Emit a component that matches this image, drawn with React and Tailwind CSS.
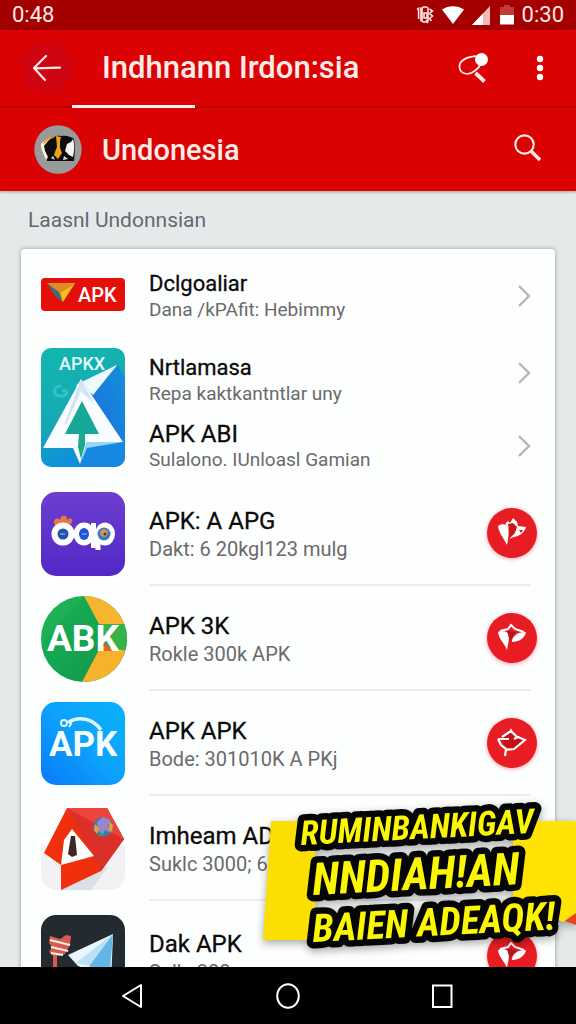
import React from "react";

const ROBOTO = "font-['Roboto','Liberation_Sans',sans-serif]";

function StatusBar() {
  return (
    <div className="flex h-[30px] shrink-0 items-center justify-between bg-[#a40000] px-3 text-[22px] leading-6 text-[#ffe9e6]">
      <span>0:48</span>
      <div className="flex items-center gap-2">
        <svg width="18" height="20" viewBox="0 0 18 20" fill="none" stroke="#ffe9e6" strokeWidth="1.6" aria-hidden="true">
          <path d="M1 4.5 2.6 3.5V14M5 2.5v14M13.5 4l3 2-3 2.500 3 2.500-3 2.500 2 2.500" />
          <rect x="6" y="2" width="6" height="15" rx="2" />
          <path d="M8 8h3v5H8zM10 15l2 3" />
        </svg>
        <svg width="22" height="18" viewBox="0 0 22 18" fill="#fff" aria-hidden="true">
          <path d="M0 3.500C6-1 16-1 22 3.500L11 18z" />
        </svg>
        <svg width="18" height="19" viewBox="0 0 18 19" aria-hidden="true">
          <path d="M18 0v19H0z" fill="#f3b9b5" />
          <path d="M11 7.400V19H0z" fill="#fff" />
        </svg>
        <svg width="14" height="20" viewBox="0 0 14 20" className="ml-0.5" aria-hidden="true">
          <path d="M4 0h6v2h4v8H0V2h4z" fill="#c23a38" />
          <path d="M0 10h14v9.500H0z" fill="#fff" />
        </svg>
        <span>0:30</span>
      </div>
    </div>
  );
}

function Header() {
  return (
    <header className="relative z-10 shrink-0 bg-[#da0202] text-white shadow-[0_1px_3px_rgba(0,0,0,0.3)]">
      <div className="relative flex h-[78px] items-center border-b-2 border-[#b90202] pl-[22px] pr-7">
        <button type="button" aria-label="Back" className="flex size-[50px] items-center justify-center rounded-full bg-[#cf0514]">
          <svg width="30" height="28" viewBox="0 0 30 28" fill="none" stroke="#ffe9e6" strokeWidth="2.200" strokeLinecap="round" strokeLinejoin="round" aria-hidden="true">
            <path d="M14 2 2 14l11 12M2 14.300 28 13.600" />
          </svg>
        </button>
        <h1 className="ml-[30px] flex-1 whitespace-nowrap text-[31px] font-medium leading-9 text-[#ffece9]">Indhnann Irdon:sia</h1>
        <button type="button" aria-label="Find apps" className="mr-11">
          <svg width="30" height="32" viewBox="0 0 30 32" fill="none" aria-hidden="true">
            <path d="M18 4C10 5 1 7 1.500 15c.5 7 9 9 15 4 3-2 5-4 6-7" stroke="#ffe9e6" strokeWidth="1.800" />
            <circle cx="23.500" cy="7.500" r="6.500" fill="#fff" />
            <path d="m17.500 21 9 8.500" stroke="#ffe9e6" strokeWidth="3.800" />
          </svg>
        </button>
        <button type="button" aria-label="More options" className="px-1">
          <svg width="8" height="26" viewBox="0 0 8 26" fill="#fff" aria-hidden="true">
            <circle cx="4" cy="4" r="3.200" />
            <circle cx="4" cy="13" r="3.200" />
            <circle cx="4" cy="22" r="3.200" />
          </svg>
        </button>
        <span className="absolute -bottom-0.5 left-[72px] h-[3px] w-[123px] bg-[#fff0ee]" />
      </div>
      <div className="flex h-[83px] items-center pl-[34px] pr-[34px]">
        <svg width="48" height="49" viewBox="0 0 48 49" aria-hidden="true">
          <ellipse cx="24" cy="24.500" rx="23.700" ry="24.300" fill="#999a9c" />
          <path d="M8 18c4-5 12-8 19-7 6-1 10 1 13 3 1 6 1 14 0 22H13C12 29 7 25 8 18z" fill="#0d0d0d" />
          <path d="M7 19c3-4 6-6 11-7l-4 4-4 5 1 5 3 6-2 3C10 29 7 25 7 19z" fill="#fff3e0" />
          <path d="M10 16c4-3 8-5 12-5l-3 2-5 2-5 5zM22 11l5 1-1 4 0 7 2 5-4 6-4-4 1-3 2-5z" fill="#eaa414" />
          <path d="M39 14c2 6 1 14 0 18l-4-2-4-4 2-7 4-2z" fill="#f4f4f4" />
          <path d="M30 31l4 3-5 1zM17 33l2-2 2 4z" fill="#ddd" />
        </svg>
        <h2 className="ml-5 flex-1 text-[29px] font-medium leading-9 text-[#ffece9]">Undonesia</h2>
        <button type="button" aria-label="Search">
          <svg width="28" height="28" viewBox="0 0 28 28" fill="none" stroke="#ffe9e6" aria-hidden="true" className="-mt-1">
            <circle cx="10.500" cy="10.500" r="9.200" strokeWidth="2.200" />
            <path d="m17 17 9 9" strokeWidth="3.600" />
          </svg>
        </button>
      </div>
    </header>
  );
}

function RedApkLogo() {
  return (
    <svg width="84" height="33" viewBox="0 0 84 33" aria-hidden="true">
      <rect width="84" height="33" rx="4" fill="#e50f0a" />
      <path d="M6 5h28L21 24 18 14z" fill="#f6a81c" />
      <path d="M6 5 19 15l3 9-8-6z" fill="#3d6f7a" />
      <path d="M34 5 19 15l3 9z" fill="#f3c11f" />
      <path d="M6 5h16l12 1-15 9z" fill="#dd8b26" />
      <text x="37" y="24" fontSize="20" fontWeight="500" fill="#fff">APK</text>
    </svg>
  );
}

function TallLogo() {
  return (
    <svg width="84" height="119" viewBox="0 0 84 119" aria-hidden="true">
      <defs>
        <linearGradient id="tallBack" x1="0" y1="0" x2="0.300" y2="1">
          <stop offset="0" stopColor="#12b8ad" />
          <stop offset="0.600" stopColor="#16a9b5" />
          <stop offset="1" stopColor="#0d8fe0" />
        </linearGradient>
        <linearGradient id="tallBlue" x1="1" y1="0" x2="0" y2="1">
          <stop offset="0" stopColor="#1590d8" />
          <stop offset="1" stopColor="#1a6fe0" />
        </linearGradient>
        <clipPath id="tallClip"><rect width="84" height="119" rx="10" /></clipPath>
      </defs>
      <g clipPath="url(#tallClip)">
        <rect width="84" height="119" fill="url(#tallBack)" />
        <path d="M77 17 51 48l29 46 4-4V30z" fill="url(#tallBlue)" />
        <path d="M43 97h41v22H38z" fill="#1688e2" />
        <path d="M76 17 36 36l-8 35 20-24z" fill="#b9e6f3" />
        <path d="M76 17 42 34l10 13z" fill="#eefafd" />
        <path d="M40 31 82 94H46l-7 22-7-16H2z" fill="#fafdff" />
        <path d="m40 31 13 25-13-13-14 32-3 2z" fill="#d2e5f3" />
        <path d="m41 53 17 33H24z" fill="#16a797" />
        <path d="M38 85h6v12l-4 14-3-12z" fill="#19ab8e" />
        <path d="m46 94 36 0-36 6-6 14z" fill="#9bd5f5" />
        <path d="M20 38c-9 0-8 11 0 10 7 0 8-7 1-5" fill="none" stroke="#43d4cb" strokeWidth="3" opacity=".6" />
        <text x="18" y="22" fontSize="18" fontWeight="500" fill="#e3fbfb">APKX</text>
      </g>
    </svg>
  );
}

function PurpleLogo() {
  return (
    <svg width="84" height="84" viewBox="0 0 84 84" aria-hidden="true">
      <defs>
        <linearGradient id="purple" x1="0" y1="0" x2="0" y2="1">
          <stop offset="0" stopColor="#6d3fd0" />
          <stop offset="1" stopColor="#5128c6" />
        </linearGradient>
      </defs>
      <rect width="84" height="84" rx="15" fill="url(#purple)" />
      <path d="M13 31c-1-4 4-6 6-3 0-6 8-6 7 0 4-4 7 0 4 4l-6 4-9-1z" fill="#e4774c" />
      <g fill="none" stroke="#fff" strokeWidth="5">
        <ellipse cx="22" cy="42" rx="9" ry="9" fill="#fff" />
        <ellipse cx="43" cy="42" rx="8" ry="9" fill="#fff" />
        <path d="M52.500 31v25" />
        <ellipse cx="64" cy="42" rx="7.500" ry="9" fill="#fff" />
        <path d="M57 38v20" />
      </g>
      <ellipse cx="22" cy="42" rx="5.500" ry="5.500" fill="#254fa8" />
      <ellipse cx="43" cy="42" rx="5" ry="6" fill="#2454db" />
      <circle cx="63" cy="42" r="6.500" fill="#3e78c7" />
      <circle cx="63" cy="41" r="3.800" fill="#d39755" />
      <circle cx="64" cy="42" r="1.500" fill="#523536" />
      <path d="M19 42h5M41 42h5" stroke="#6da7ea" strokeWidth="1.500" />
    </svg>
  );
}

function GreenLogo() {
  return (
    <svg width="86" height="86" viewBox="0 0 86 86" className="-mr-0.5" aria-hidden="true">
      <defs>
        <linearGradient id="green" x1="0" y1="0" x2="1" y2="1">
          <stop offset="0" stopColor="#22b957" />
          <stop offset="1" stopColor="#0b9149" />
        </linearGradient>
        <clipPath id="round"><circle cx="43" cy="43" r="43" /></clipPath>
      </defs>
      <g clipPath="url(#round)">
        <rect width="86" height="86" fill="url(#green)" />
        <path d="M43 0 58 28 29 61 0 86V50z" fill="#12a751" opacity=".6" />
        <path d="m43 0 15 28h28V0z" fill="#f7b52f" />
        <path d="M58 28h28v32L72 50z" fill="#35b34a" />
        <path d="m60 50 26 5v31H41z" fill="#f6b12d" />
        <path d="m64 46 7 9h-8z" fill="#e75f25" />
        <text x="6" y="55" fontSize="37" fontWeight="700" fill="#fff">ABK</text>
      </g>
    </svg>
  );
}

function BlueLogo() {
  return (
    <svg width="84" height="83" viewBox="0 0 84 83" aria-hidden="true">
      <defs>
        <linearGradient id="blue" x1="1" y1="0" x2="0" y2="1">
          <stop offset="0" stopColor="#08b3fb" />
          <stop offset="0.500" stopColor="#0da1fb" />
          <stop offset="1" stopColor="#087af8" />
        </linearGradient>
      </defs>
      <rect width="84" height="83" rx="15" fill="url(#blue)" />
      <path d="M28 20c9-6 24-4 32 8" fill="none" stroke="#dff5ff" strokeWidth="3.500" />
      <circle cx="23" cy="21" r="3" fill="none" stroke="#dff5ff" strokeWidth="2" />
      <path d="m27 19 3 3-2 3" fill="none" stroke="#dff5ff" strokeWidth="2" />
      <text x="8" y="54" fontSize="35" fontWeight="700" fill="#f3fbff">APK</text>
    </svg>
  );
}

function GemLogo() {
  return (
    <svg width="84" height="84" viewBox="0 0 84 84" aria-hidden="true">
      <path d="M0 38h84v30a15 15 0 0 1-15 15H15A15 15 0 0 1 0 68z" fill="#f2f2f5" />
      <path d="M22 60 67 60 50 83H20z" fill="#dcdfe6" />
      <path d="m26 1 40 0 17 31-23 32-40 19V58L3 46z" fill="#f02f0c" />
      <path d="m26 1 40 0 17 31-23 32-7-14z" fill="#e53a32" />
      <path d="m26 1 27 49 7 14 23-32z" fill="#dd2f2a" />
      <path d="m26 1 40 0 17 31z" fill="#ed453e" />
      <path d="m31 22 22 27-33 9 3-25z" fill="#fffdfc" />
      <path d="m30 29 4 0 2 19-5 2-4-3z" fill="#3d2528" />
      <circle cx="62" cy="20" r="10" fill="#4673ad" />
      <path d="m56 15 6-5 7 3-2 5 3 8-6-3-3 6-5-7z" fill="#9d85c9" />
      <path d="m68 14 4 4-1 7-3-2zM54 17l4 5-2 5-3-4z" fill="#d9a938" />
      <path d="m59 24 4 5-5 0z" fill="#38a05e" />
    </svg>
  );
}

function DarkLogo() {
  return (
    <svg width="84" height="84" viewBox="0 0 84 84" aria-hidden="true">
      <rect width="84" height="84" rx="15" fill="#232b31" />
      <path d="m72 19-45 21 10 11 22 8 11 10z" fill="#e8f7ff" />
      <path d="M72 19 48 51l20 18z" fill="#64b7e4" />
      <path d="m72 19-37 29 13 3z" fill="#b9e0f4" />
      <path d="m9 21 10 3 6-4 5 1-1 9-5 9-8 2v12h-4V41l-4-4 3-5-3-4z" fill="#d95b4d" />
      <path d="m9 25 20 5M10 32l17 4M10 38l12 2" stroke="#fff0e9" strokeWidth="2" />
    </svg>
  );
}

const marks = {
  bird: (
    <>
      <path d="M1 8c4-3 8-2 10 1 1 4 1 9-1 18C6 19 2 15 1 8z" fill="#fff" />
      <path d="m8 6 3-3 2 2 3-5 4 4 1 4 8 1c-1 5-6 9-12 10-2 1-4 1-5 3l4-8z" fill="#fff" />
      <path d="m11 6 5-1 4 4-2 6-6 6 0-10z" fill="#c9151c" />
      <path d="m22 12 4 0-2 3z" fill="#e71d23" />
    </>
  ),
  leaf: (
    <>
      <path d="M1 9c3-2 8-1 10 1 2 5 0 10-1 17C7 19 2 17 1 9zM29 9c-1 6-7 10-14 10 0-5 4-10 14-10z" fill="#fff" />
      <path d="m3 8 8-2 3-4 4 4 9 3" fill="none" stroke="#fff" strokeWidth="2" />
      <path d="m10 8 9 1-6 9z" fill="#b9151c" />
    </>
  ),
  star: (
    <>
      <path d="m6 10 8-6 6 5 5 4-9 8-9-4z" fill="#c51018" />
      <path d="M1 11h11M1 11l3 6 5 4-1 7M8 22l9-1 11-9-7-3-4 2M5 9l9-6 6 6" fill="none" stroke="#fff" strokeWidth="2.200" />
      <path d="m14 0 2 5h-4z" fill="#fff" />
    </>
  ),
};

function ActionButton({ mark, label }) {
  return (
    <button type="button" aria-label={label} className="-mr-1.5 flex size-[50px] shrink-0 items-center justify-center rounded-full bg-[#e71d23] shadow-[0_1px_4px_rgba(231,29,35,0.4)]">
      <svg width="30" height="30" viewBox="0 0 30 30" aria-hidden="true">{marks[mark]}</svg>
    </button>
  );
}

function Chevron({ className }) {
  return (
    <svg width="14" height="22" viewBox="0 0 14 22" fill="none" stroke="#b4b6b8" strokeWidth="2.400" className={"shrink-0 " + className} aria-hidden="true">
      <path d="m2 1 10 10L2 21" />
    </svg>
  );
}

function LinkRow({ title, detail, className, titleClass = "text-[22px]", chevronClass = "" }) {
  return (
    <a href="#app" className={"flex items-center justify-between " + className}>
      <span className="flex flex-col whitespace-nowrap">
        <span className={"leading-7 text-[#0b0b0b] [-webkit-text-stroke:0.300px_#0b0b0b] " + titleClass}>{title}</span>
        <span className="text-[19px] leading-6 text-[#6a6a6c]">{detail}</span>
      </span>
      <Chevron className={chevronClass} />
    </a>
  );
}

const apps = [
  { title: "APK: A APG", detail: "Dakt: 6 20kgl123 mulg", Logo: PurpleLogo, mark: "bird" },
  { title: "APK 3K", detail: "Rokle 300k APK", Logo: GreenLogo, mark: "leaf" },
  { title: "APK APK", detail: "Bode: 301010K A PKj", Logo: BlueLogo, mark: "star" },
  { title: "Imheam AD", detail: "Suklc 3000; 6", Logo: GemLogo, mark: null },
  { title: "Dak APK", detail: "Sulk: 300", Logo: DarkLogo, mark: "leaf" },
];

function AppRow({ title, detail, Logo, mark }) {
  return (
    <li className="flex h-[105px] items-center gap-6 pl-5 pr-6 last:h-[111px]">
      <Logo />
      <div className="flex h-full flex-1 items-center justify-between border-b-2 border-[#ebecec]">
        <div className="flex flex-col whitespace-nowrap">
          <span className="text-2xl leading-8 text-[#0b0b0b] [-webkit-text-stroke:0.300px_#0b0b0b]">{title}</span>
          <span className="text-xl leading-6 text-[#6a6a6c]">{detail}</span>
        </div>
        {mark && <ActionButton mark={mark} label={"Download " + title} />}
      </div>
    </li>
  );
}

function PromoBanner() {
  return (
    <aside className="absolute bottom-0 right-0">
      <svg
        width="313"
        height="167"
        viewBox="0 0 313 167"
        className="font-['Roboto_Condensed','Liberation_Sans_Narrow','Liberation_Sans',sans-serif] font-bold italic drop-shadow-[0_3px_4px_rgba(0,0,0,0.35)]"
      >
        <path d="M8 21h44v119H0z" fill="#fbdf03" />
        <path d="M250 21h63v92l-13 9-50-20z" fill="#fee305" />
        <path d="m313 113-11 8 11 4z" fill="#e9431b" />
        <g fill="#fbf704" stroke="#050505" strokeWidth="13" strokeLinejoin="round" paintOrder="stroke">
          <text x="38" y="45" fontSize="34" transform="rotate(-3 38 45)">RUMINBANKIGAV</text>
          <text x="50" y="95" fontSize="45" transform="rotate(-3 50 95)">NNDIAH!AN</text>
          <text x="50" y="142" fontSize="39" transform="rotate(-3 50 142)">BAIEN ADEAQK!</text>
        </g>
      </svg>
    </aside>
  );
}

function NavBar() {
  return (
    <nav className="flex h-[57px] shrink-0 items-center justify-center gap-[132px] bg-black">
      <button type="button" aria-label="Back">
        <svg width="22" height="26" viewBox="0 0 22 26" fill="none" stroke="#fff" strokeWidth="2" strokeLinejoin="round" aria-hidden="true">
          <path d="M19 2v22L1 13z" />
        </svg>
      </button>
      <button type="button" aria-label="Home">
        <svg width="24" height="26" viewBox="0 0 24 26" fill="none" stroke="#fff" strokeWidth="2" aria-hidden="true">
          <ellipse cx="12" cy="13" rx="10.800" ry="11.800" />
        </svg>
      </button>
      <button type="button" aria-label="Recent apps">
        <svg width="22" height="26" viewBox="0 0 22 26" fill="none" stroke="#fff" strokeWidth="2" aria-hidden="true">
          <rect x="1" y="2.500" width="18.500" height="21.500" />
        </svg>
      </button>
    </nav>
  );
}

export default function App() {
  return (
    <div className={"flex h-screen flex-col overflow-hidden bg-[#e5e9ea] " + ROBOTO}>
      <StatusBar />
      <Header />
      <main className="relative min-h-0 flex-1 overflow-hidden">
        <h3 className="px-7 py-[15px] text-[21px] leading-7 text-[#63696d]">Laasnl Undonnsian</h3>
        <section className="mx-[21px] rounded-t bg-[#fdfefe] shadow-[0_0_4px_rgba(0,0,0,0.35)]">
          <div className="flex h-[91px] items-center gap-6 pl-5 pr-6">
            <RedApkLogo />
            <LinkRow title="Dclgoaliar" detail="Dana /kPAfit: Hebimmy" className="flex-1 pt-0.5" />
          </div>
          <div className="flex gap-6 pl-5 pr-6 pt-2">
            <TallLogo />
            <div className="flex flex-1 flex-col">
              <LinkRow title="Nrtlamasa" detail="Repa kaktkantntlar uny" className="h-16" chevronClass="mt-3.5 self-start" />
              <LinkRow title="APK ABI" detail="Sulalono. IUnloasl Gamian" className="h-[68px]" titleClass="text-2xl" />
            </div>
          </div>
          <ul className="pt-px">
            {apps.map((app) => (
              <AppRow key={app.title} {...app} />
            ))}
          </ul>
        </section>
        <PromoBanner />
      </main>
      <NavBar />
    </div>
  );
}
